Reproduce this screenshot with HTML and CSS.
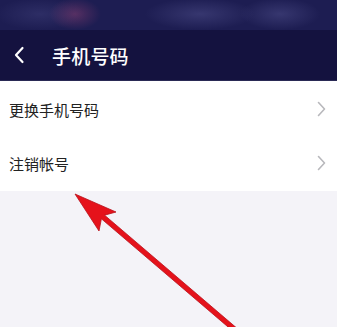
FILE: index.html
```html
<!DOCTYPE html>
<html lang="zh">
<head>
<meta charset="utf-8">
<link rel="stylesheet" href="styles.css">
</head>
<body>
<div class="screen">
  <div class="status"></div>
  <div class="nav">
    <svg class="back" width="12" height="18" viewBox="0 0 12 18"><path d="M9.5 2 L3 9 L9.5 16" fill="none" stroke="#fff" stroke-width="2.2" stroke-linecap="round" stroke-linejoin="round"/></svg>
    <span class="title">手机号码</span>
  </div>
  <div class="list">
    <div class="row"><span>更换手机号码</span><svg class="chev" width="9" height="16" viewBox="0 0 9 16"><path d="M1.5 1.5 L7.5 8 L1.5 14.5" fill="none" stroke="#b8b8bc" stroke-width="1.6" stroke-linecap="round" stroke-linejoin="round"/></svg></div>
    <div class="row"><span>注销帐号</span><svg class="chev" width="9" height="16" viewBox="0 0 9 16"><path d="M1.5 1.5 L7.5 8 L1.5 14.5" fill="none" stroke="#b8b8bc" stroke-width="1.6" stroke-linecap="round" stroke-linejoin="round"/></svg></div>
  </div>
  <div class="rest"></div>
  <svg class="arrow" width="337" height="327" viewBox="0 0 337 327">
    <polygon points="75,194 116,212 104.6,215.2 241.6,332.2 238.4,335.8 101.4,218.8 99,231" fill="#e5121b" stroke="#b8101a" stroke-width="0.8" stroke-linejoin="round"/>
  </svg>
</div>
</body>
</html>
```
FILE: styles.css
```css
html, body { margin: 0; padding: 0; }
body {
  width: 337px;
  height: 327px;
  overflow: hidden;
  font-family: "Noto Sans CJK SC", "Noto Sans", sans-serif;
  background: #f4f3f8;
}
.screen {
  position: relative;
  width: 337px;
  height: 327px;
  display: flex;
  flex-direction: column;
}
.status {
  height: 30px;
  flex: none;
  background:
    radial-gradient(ellipse 26px 16px at 75px 14px, rgba(130,60,110,0.55), transparent),
    radial-gradient(ellipse 45px 16px at 40px 14px, rgba(70,70,130,0.4), transparent),
    radial-gradient(ellipse 55px 16px at 200px 14px, rgba(80,80,140,0.5), transparent),
    radial-gradient(ellipse 40px 16px at 280px 14px, rgba(80,80,140,0.5), transparent),
    #1d1d52;
}
.nav {
  height: 50px;
  flex: none;
  background: #14123f;
  display: flex;
  align-items: center;
  border-bottom: 1px solid #2a2a55;
}
.back { margin-left: 13px; }
.title {
  margin-left: 27px;
  color: #ffffff;
  font-size: 19px;
  font-weight: 500;
  letter-spacing: 0.2px;
}
.list {
  background: #ffffff;
  flex: none;
  padding-top: 1px;
  padding-bottom: 1px;
}
.row {
  height: 54px;
  display: flex;
  align-items: center;
  justify-content: space-between;
  padding: 0 11px 0 9px;
  font-size: 15px;
  color: #222222;
}
.rest { flex: 1; background: #f4f3f8; }
.arrow { position: absolute; left: 0; top: 0; }
```
